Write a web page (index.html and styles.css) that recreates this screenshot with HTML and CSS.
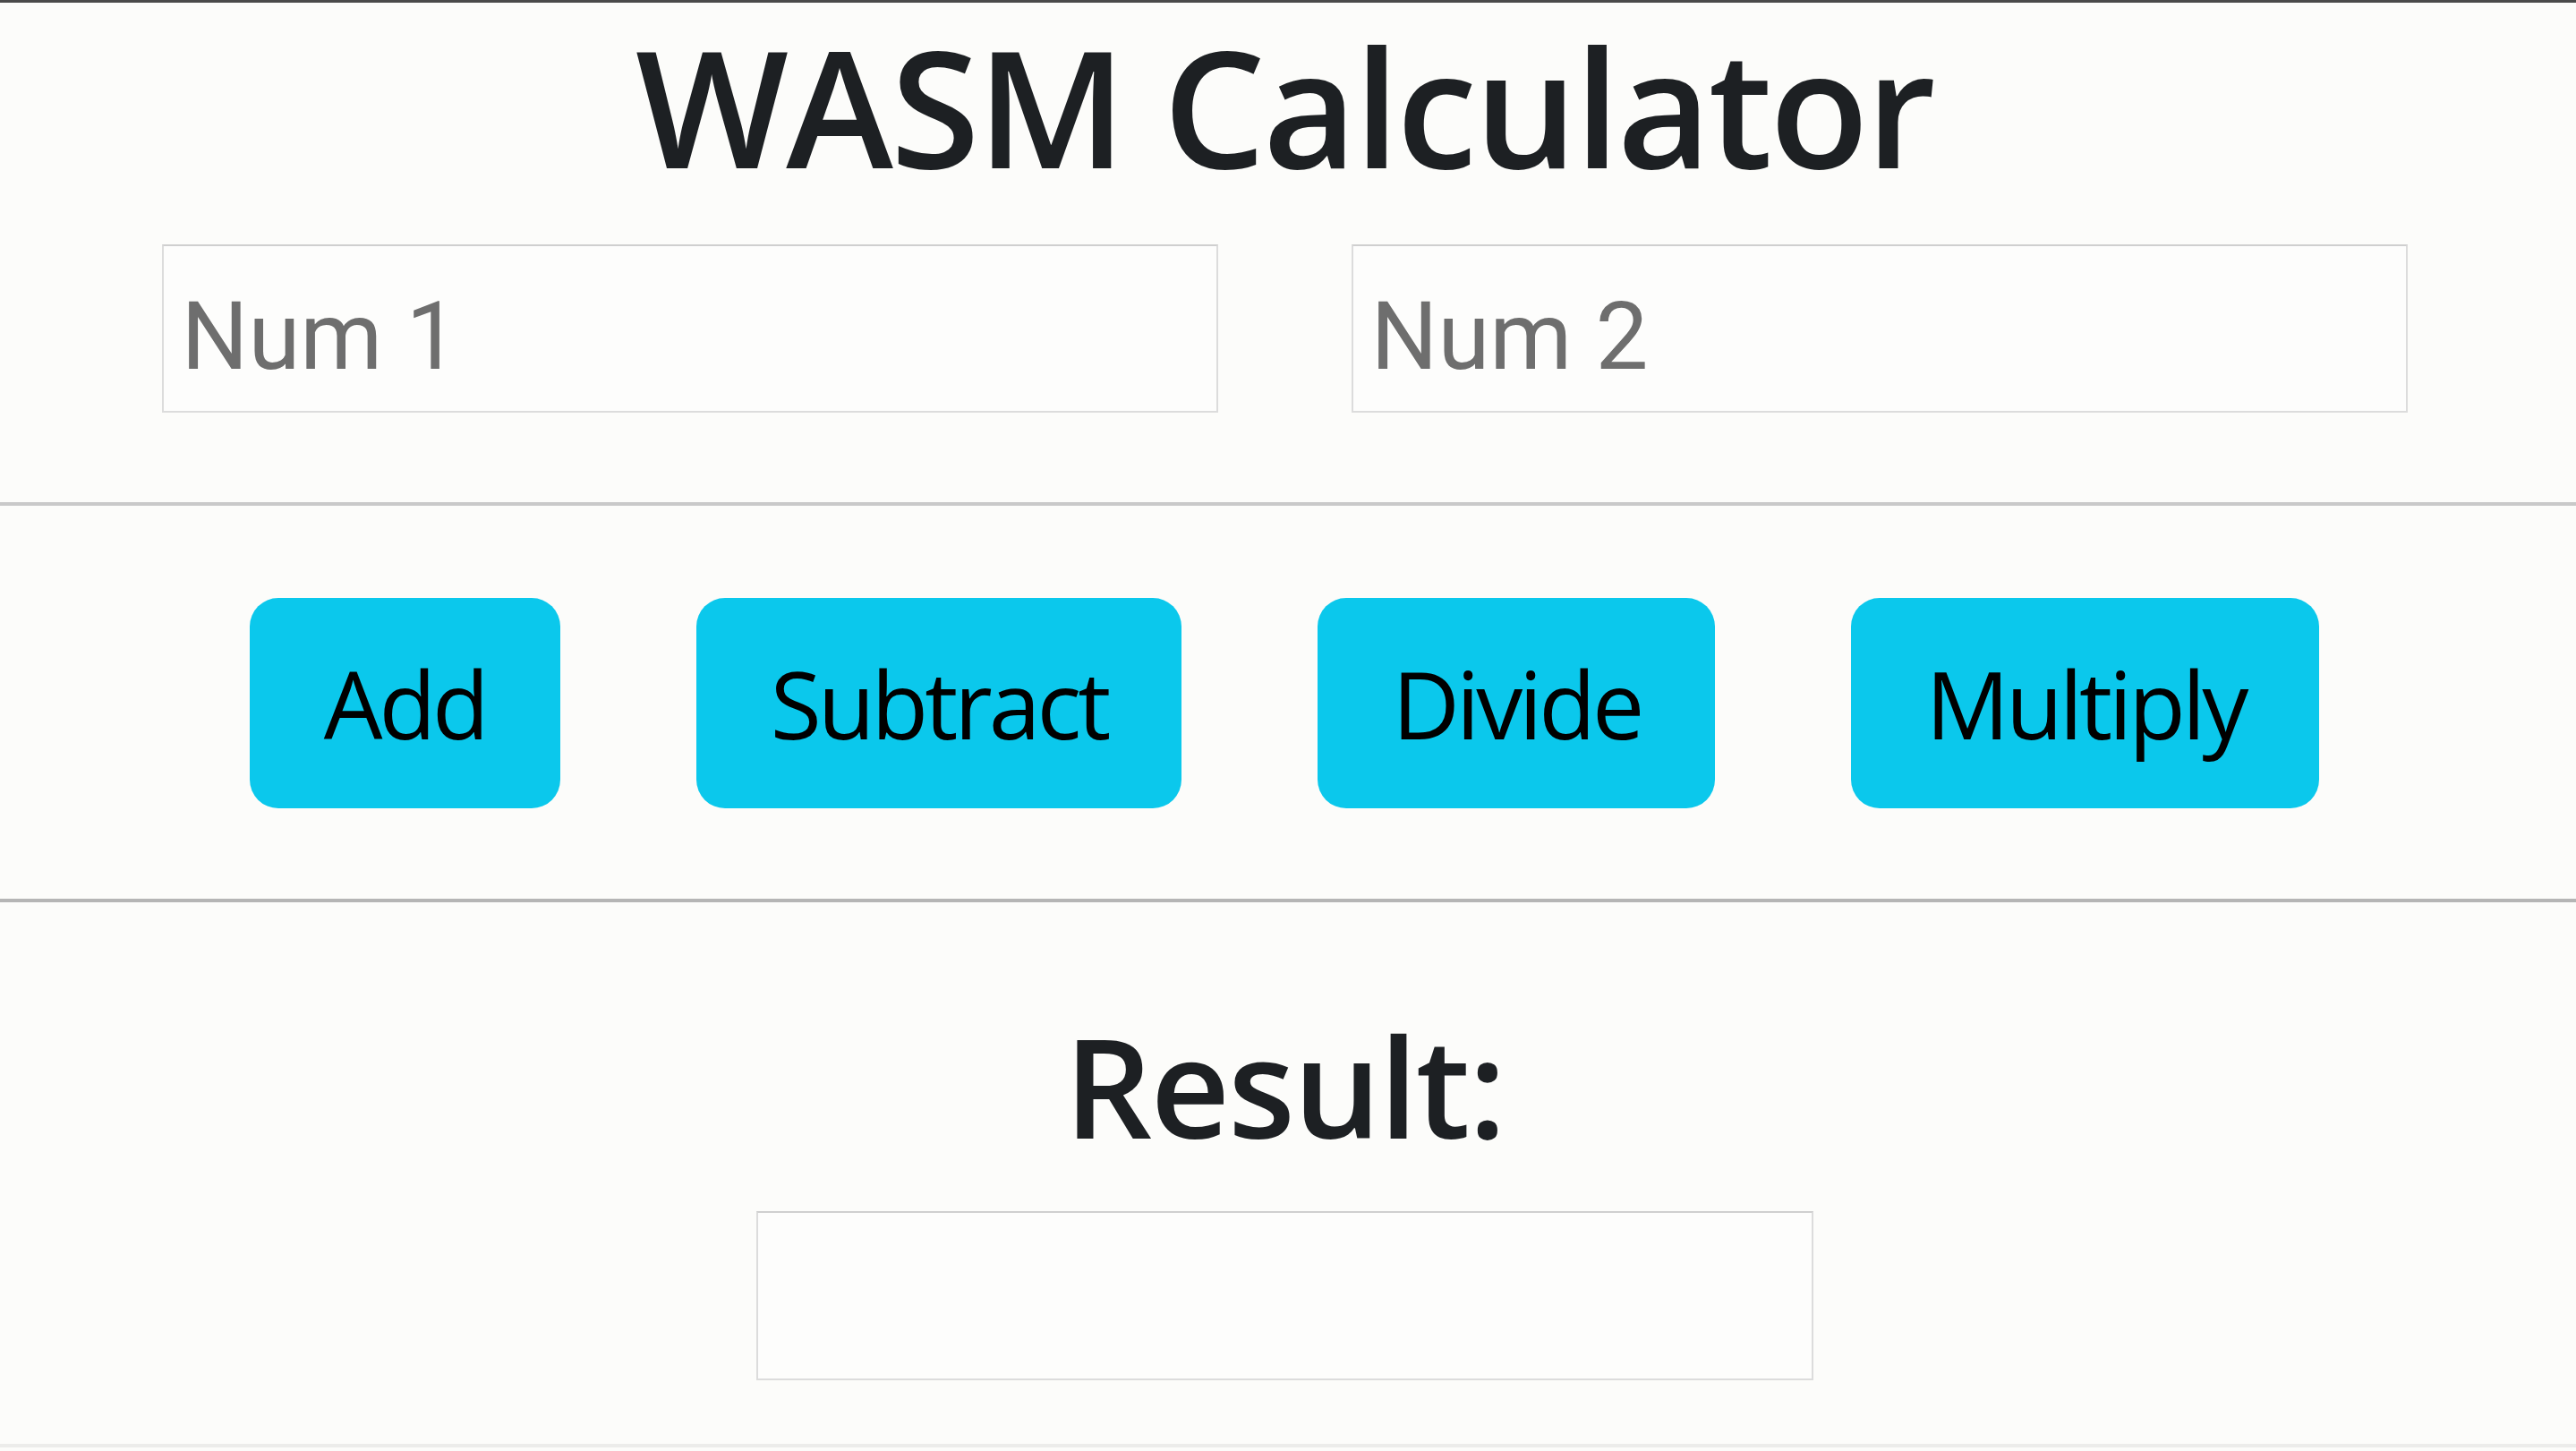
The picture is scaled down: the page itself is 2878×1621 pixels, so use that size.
FILE: index.html
```html
<!DOCTYPE html>
<html lang="en">
<head>
<meta charset="utf-8">
<title>WASM Calculator</title>
<link rel="stylesheet" href="styles.css">
</head>
<body>
<main class="app">
  <h1 class="title">WASM Calculator</h1>
  <div class="inputs">
    <input class="field" type="text" placeholder="Num 1">
    <input class="field" type="text" placeholder="Num 2">
  </div>
  <hr class="rule">
  <div class="buttons">
    <button class="btn">Add</button>
    <button class="btn">Subtract</button>
    <button class="btn">Divide</button>
    <button class="btn">Multiply</button>
  </div>
  <hr class="rule rule-dark">
  <section class="result">
    <h2 class="result-title">Result:</h2>
    <div class="result-box"></div>
  </section>
</main>
</body>
</html>
```

FILE: styles.css
```css
html, body {
  margin: 0;
  padding: 0;
}
body {
  background: #fcfcfa;
  border-top: 3px solid #4a4a4a;
  min-height: 1617px;
  box-sizing: border-box;
  border-bottom: 4px solid #ececea;
  color: #1c1e21;
  font-family: "Open Sans", "Noto Sans", sans-serif;
}
.app {
  padding-right: 8px;
  display: flex;
  flex-direction: column;
}
.title {
  margin: -3px 0 0;
  text-align: center;
  font-size: 181px;
  line-height: 236px;
  font-weight: 600;
  letter-spacing: -3px;
  color: #1d2023;
}
.inputs {
  margin-top: 37px;
  display: flex;
  justify-content: center;
  gap: 149px;
}
.field {
  box-sizing: border-box;
  width: 1180px;
  height: 188px;
  margin: 0;
  border: 2px solid #dcdcdc;
  border-top-color: #cfcfcf;
  background: #fdfdfc;
  padding: 18px 0 0 20px;
  font-family: Roboto, "Liberation Sans", sans-serif;
  font-size: 105px;
  color: #333;
  outline: none;
}
.field::placeholder {
  color: #6e6e6e;
}
.rule {
  margin: 100px 0 0;
  border: 0;
  height: 4px;
  background: #c9c9c9;
  width: calc(100% + 8px);
}
.rule-dark {
  margin-top: 101px;
  background: #b5b5b5;
}
.buttons {
  margin-top: 103px;
  display: flex;
  justify-content: center;
  gap: 152px;
}
.btn {
  height: 235px;
  padding: 0 83px;
  border: 0;
  border-radius: 32px;
  background: #0bc8ec;
  color: #000;
  font-family: "Open Sans", "Noto Sans", sans-serif;
  font-size: 104px;
  font-weight: 400;
  letter-spacing: -4px;
  line-height: 1;
}
.result {
  display: flex;
  flex-direction: column;
  align-items: center;
}
.result-title {
  margin: 112px 0 0;
  font-size: 154px;
  line-height: 185px;
  font-weight: 600;
  letter-spacing: -2px;
  color: #1d2023;
}
.result-box {
  margin-top: 48px;
  box-sizing: border-box;
  width: 1181px;
  height: 189px;
  border: 2px solid #dcdcdc;
  border-top-color: #cfcfcf;
  background: #fdfdfc;
}
```
